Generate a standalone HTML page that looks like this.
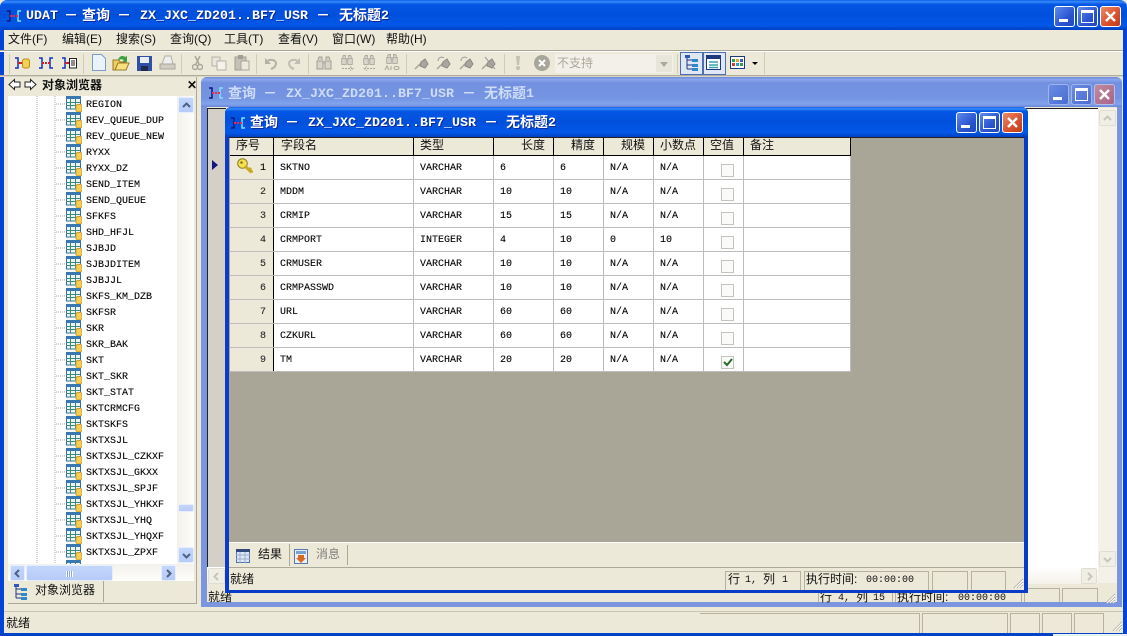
<!DOCTYPE html>
<html><head><meta charset="utf-8"><style>
html,body{margin:0;padding:0;background:#ece9d8}
#r{position:relative;width:1127px;height:636px;overflow:hidden;background:#ece9d8;font-family:"Liberation Mono","Noto Sans CJK SC",monospace;font-size:10px;color:#000}
#r div,#r span,#r svg{position:absolute}
.t{white-space:pre;line-height:14px;height:14px;margin-top:1px;-webkit-text-stroke:.1px #000}
.t:has(+svg){margin-top:2px}
.c{font-family:"Liberation Sans","Noto Sans CJK SC",sans-serif;font-size:12px;line-height:16px;height:16px;white-space:pre;color:#111}
.m{font-family:"Liberation Mono",monospace;font-size:10px;line-height:14px;height:14px;white-space:pre;color:#111}
.b{font-family:"Liberation Mono","Noto Sans CJK SC",monospace;font-weight:bold;font-size:13.33px;line-height:18px;height:18px;white-space:pre;color:#fff;text-shadow:1px 1px 0 #0a2a9c}
.z{font-size:14px}
.i{color:#cfdcf6;text-shadow:none}
.tb{background:linear-gradient(#0a5de8 0,#3a8cf8 6%,#0456e4 14%,#0150dc 50%,#0258e8 85%,#0240c0 100%)}
.tbi{background:linear-gradient(#6c87d8 0,#8aa6ec 8%,#7290df 20%,#7494e2 70%,#81a3ec 90%,#6a86d6 100%)}
.wb{width:19px;height:19px;border:1px solid #fff;border-radius:3px;background:linear-gradient(135deg,#5f8af0,#2a55d0 60%,#2048c0)}
.wx{background:linear-gradient(135deg,#ea8a6a,#d8502c 60%,#c03c18)}
.wbi{border-color:#9fb4ea;background:linear-gradient(135deg,#6a8ce4,#4a6cd0)}
.wxi{border-color:#b6bfe6;background:linear-gradient(135deg,#c18a9c,#a8648a)}
.mn{left:4px;top:12px;width:9px;height:3px;background:#fff}
.mx{left:3px;top:3px;border:1px solid #fff;border-top-width:3px;box-sizing:border-box;width:13px;height:13px}
.sb{background:linear-gradient(#c4d6fb,#b6cbf8);border:1px solid #e6eefd;border-radius:2px;box-sizing:border-box}
.dis{background:#f0efe6;border:1px solid #e0ded0;box-sizing:border-box;border-radius:2px}
.p{border:1px solid #b6b29f;border-bottom:0;box-sizing:border-box;}
.h{height:1px;background:#bdbdbd}
.v{width:1px;background:#bdbdbd}
.k{width:1px;background:#000}
.cb{width:11px;height:11px;border:1px solid #c4c4bc;background:#fafafa}
.ic{width:16px;height:16px}
</style></head><body><div id="r">
<svg style="display:none;width:0;height:0"><defs>
<symbol id="tbl" viewBox="0 0 16 16"><rect x="0.5" y="1" width="14" height="12" fill="#eef4fa" stroke="#3a7098"/><rect x="0" y="0" width="15" height="3" fill="#3a78b0"/><path d="M0 6.500h14M0 9.500h14M4.500 3v10M9.500 3v10" stroke="#3a8a78"/><rect x="10" y="8.500" width="6" height="7.500" rx="2" fill="#f4d050" stroke="#c8a030"/></symbol>
<symbol id="lnk" viewBox="0 0 16 12"><path d="M1 1h3v10H1M15 1h-3v10h3" fill="none" stroke="#1030c0" stroke-width="1.500"/><path d="M4 6h8" stroke="#d02030" stroke-width="2" stroke-dasharray="2 1"/></symbol>
<symbol id="lnkw" viewBox="0 0 16 12"><path d="M1 1h3v10H1" fill="none" stroke="#0a1a80" stroke-width="1.500"/><path d="M15 1h-3v10h3" fill="none" stroke="#7fe0ff" stroke-width="1.500"/><path d="M4 6h8" stroke="#e03050" stroke-width="2" stroke-dasharray="2 1"/></symbol>
<symbol id="bin" viewBox="0 0 16 16"><path d="M2 5l1-3h3v3M14 5l-1-3h-3v3" fill="#d4d2c8" stroke="#a09e92"/><rect x="1" y="6" width="6" height="8" fill="#d8d6cc" stroke="#a09e92"/><rect x="9" y="6" width="6" height="8" fill="#d8d6cc" stroke="#a09e92"/><rect x="6" y="6" width="4" height="3" fill="#b8b6a8"/></symbol>
<symbol id="cone" viewBox="0 0 16 16"><path d="M1 14L8 7" stroke="#a8a69a" stroke-width="1.500"/><path d="M7 7l4-3 3 5-3 4-5-2z" fill="#a8a6a0" stroke="#8c8a80"/></symbol>
<symbol id="grip" viewBox="0 0 12 12"><path d="M11 2L2 11M11 5L5 11M11 8L8 11" stroke="#a8a594"/><path d="M11 3L3 11M11 6L6 11M11 9L9 11" stroke="#fff"/></symbol>
</defs></svg>

<!-- main frame -->
<div class="tb" style="left:0;top:0;width:1127px;height:30px;border-radius:7px 7px 0 0"></div>
<div style="left:0;top:30px;width:4px;height:606px;background:#0343d8"></div>
<div style="left:1123px;top:30px;width:4px;height:606px;background:#0343d8"></div>
<div style="left:0;top:633px;width:1127px;height:3px;background:#0343c8"></div>
<div style="left:1053px;top:634px;width:74px;height:2px;background:#e8f0fa"></div>
<svg style="left:6px;top:10px;width:16px;height:12px"><use href="#lnkw"/></svg>
<span class="b" style="left:26px;top:8px">UDAT</span><span class="b z" style="left:64px;top:8px">－</span><span class="b z" style="left:82px;top:8px">查询</span><span class="b z" style="left:117px;top:8px">－</span><span class="b" style="left:140px;top:8px">ZX_JXC_ZD201..BF7_USR</span><span class="b z" style="left:316px;top:8px">－</span><span class="b z" style="left:339px;top:8px">无标题</span><span class="b" style="left:381px;top:8px">2</span>
<div class="wb" style="left:1054px;top:6px"><div class="mn"></div></div>
<div class="wb" style="left:1077px;top:6px"><div class="mx"></div></div>
<div class="wb wx" style="left:1100px;top:6px"><svg style="left:3px;top:3px;width:13px;height:13px"><path d="M2 2l9 9M11 2l-9 9" stroke="#fff" stroke-width="2.400"/></svg></div>

<!-- menu -->
<span class="c" style="left:8px;top:31px">文件(F)</span>
<span class="c" style="left:62px;top:31px">编辑(E)</span>
<span class="c" style="left:116px;top:31px">搜索(S)</span>
<span class="c" style="left:170px;top:31px">查询(Q)</span>
<span class="c" style="left:224px;top:31px">工具(T)</span>
<span class="c" style="left:278px;top:31px">查看(V)</span>
<span class="c" style="left:332px;top:31px">窗口(W)</span>
<span class="c" style="left:386px;top:31px">帮助(H)</span>
<div style="left:0;top:50px;width:1123px;height:1px;background:#aca899"></div>
<div style="left:0;top:51px;width:1123px;height:1px;background:#fff"></div>

<!-- toolbar -->
<div style="left:9px;top:54px;width:1px;height:20px;background:#cfccb8"></div>
<svg style="left:14px;top:57px;width:17px;height:12px"><path d="M1 1h3v10H1" fill="none" stroke="#1030c0" stroke-width="1.500"/><path d="M4 6h4" stroke="#d02030" stroke-width="2"/><rect x="8.500" y="2" width="7" height="9" rx="2" fill="#f4d050" stroke="#b89020"/></svg>
<svg style="left:38px;top:57px;width:16px;height:12px"><use href="#lnk"/></svg>
<svg style="left:61px;top:57px;width:17px;height:12px"><path d="M1 1h3v10H1" fill="none" stroke="#1030c0" stroke-width="1.500"/><path d="M4 6h4" stroke="#d02030" stroke-width="2"/><rect x="8.500" y="1.500" width="7" height="9.500" fill="#fff" stroke="#222"/><path d="M10 4h4M10 6h4M10 8h4" stroke="#222"/></svg>
<div style="left:83px;top:54px;width:1px;height:20px;background:#cfccb8"></div>
<svg style="left:91px;top:54px;width:16px;height:18px"><path d="M1.500 .5h9l4 4v12h-13z" fill="#eaf2fc" stroke="#7d9bc8"/></svg>
<svg style="left:112px;top:54px;width:18px;height:18px"><path d="M1 6h6l1 2h6v8H1z" fill="#f0cf60" stroke="#9a7a20"/><path d="M3 16l3-7h11l-3 7z" fill="#f8e080" stroke="#9a7a20"/><path d="M6 6c1-4 5-5 7-3l2-1v6h-5l2-2c-2-1-4-1-6 0z" fill="#40a040"/></svg>
<svg style="left:137px;top:56px;width:15px;height:15px"><rect width="15" height="15" fill="#3050a8"/><rect x="3" y="1" width="9" height="6" fill="#e8ecf4"/><rect x="4" y="10" width="7" height="5" fill="#20284c"/></svg>
<svg style="left:159px;top:55px;width:17px;height:17px"><path d="M3 9l3-8h6l2 8z" fill="#eee" stroke="#b0aea4"/><path d="M1 9h15v5H1z" fill="#d0cec4" stroke="#a8a69a"/></svg>
<div style="left:181px;top:54px;width:1px;height:20px;background:#cfccb8"></div>
<svg style="left:192px;top:55px;width:11px;height:16px"><path d="M3 1l4 8M8 1L4 9" stroke="#aaa89c" stroke-width="1.500"/><circle cx="3" cy="12" r="2.500" fill="none" stroke="#aaa89c" stroke-width="1.500"/><circle cx="8" cy="12" r="2.500" fill="none" stroke="#aaa89c" stroke-width="1.500"/></svg>
<svg style="left:211px;top:56px;width:16px;height:15px"><rect x="1" y="1" width="8" height="9" fill="#e8e6dc" stroke="#b4b2a6"/><rect x="6" y="5" width="9" height="9" fill="#f4f2ea" stroke="#b4b2a6"/></svg>
<svg style="left:234px;top:55px;width:16px;height:16px"><rect x="1" y="2" width="11" height="13" fill="#c4c2b6" stroke="#a09e92"/><rect x="4" y="0" width="5" height="4" fill="#a09e92"/><rect x="7" y="6" width="8" height="9" fill="#eceade" stroke="#a8a69a"/></svg>
<div style="left:256px;top:54px;width:1px;height:20px;background:#cfccb8"></div>
<svg style="left:264px;top:56px;width:14px;height:14px"><path d="M2 6c3-3 9-3 10 1 0 3-2 5-5 6" fill="none" stroke="#b4b2a6" stroke-width="2"/><path d="M1 2v6h6z" fill="#b4b2a6"/></svg>
<svg style="left:287px;top:56px;width:14px;height:14px"><path d="M12 6C9 3 3 3 2 7c0 3 2 5 5 6" fill="none" stroke="#c0beb2" stroke-width="2"/><path d="M13 2v6H7z" fill="#c0beb2"/></svg>
<div style="left:308px;top:54px;width:1px;height:20px;background:#cfccb8"></div>
<svg style="left:316px;top:55px;width:16px;height:16px"><use href="#bin"/></svg>
<svg style="left:339px;top:54px;width:16px;height:12px"><use href="#bin"/></svg><svg style="left:342px;top:66px;width:14px;height:5px"><path d="M0 2.500h10M8 .5l3 2-3 2" fill="none" stroke="#a8a69a" stroke-dasharray="2 1"/></svg>
<svg style="left:361px;top:54px;width:16px;height:12px"><use href="#bin"/></svg><svg style="left:362px;top:66px;width:14px;height:5px"><path d="M13 2.500H3M5 .5l-3 2 3 2" fill="none" stroke="#a8a69a" stroke-dasharray="2 1"/></svg>
<svg style="left:384px;top:53px;width:16px;height:12px"><use href="#bin"/></svg><svg style="left:384px;top:65px;width:16px;height:6px"><path d="M1 5l2-4 2 4M7 1v4M10 3c0-2 5-2 5 0s-5 2-5 0z" fill="none" stroke="#a8a69a"/></svg>
<div style="left:406px;top:54px;width:1px;height:20px;background:#cfccb8"></div>
<svg class="ic" style="left:414px;top:55px"><use href="#cone"/></svg>
<svg class="ic" style="left:436px;top:55px"><use href="#cone"/><path d="M2 6c0-3 3-5 6-3" fill="none" stroke="#999"/></svg>
<svg class="ic" style="left:459px;top:55px"><use href="#cone"/><path d="M2 6c0-3 3-5 6-3" fill="none" stroke="#999"/></svg>
<svg class="ic" style="left:481px;top:55px"><use href="#cone"/><path d="M4 2l10 12" stroke="#999"/></svg>
<div style="left:504px;top:54px;width:1px;height:20px;background:#cfccb8"></div>
<svg style="left:514px;top:55px;width:8px;height:16px"><path d="M2 1h4L5 10H3z" fill="#c4c2b6"/><circle cx="4" cy="13" r="2" fill="#c4c2b6"/></svg>
<svg class="ic" style="left:534px;top:55px"><circle cx="8" cy="8" r="8" fill="#a8a69a"/><path d="M5 5l6 6M11 5l-6 6" stroke="#fff" stroke-width="2"/></svg>
<div style="left:555px;top:54px;width:118px;height:19px;background:#f2f0e8"></div>
<div style="left:656px;top:55px;width:16px;height:17px;background:#e8e6da"></div>
<div style="left:660px;top:62px;width:0;height:0;border:4px solid transparent;border-top:5px solid #aca899;border-bottom:0"></div>
<span class="c" style="left:557px;top:55px;color:#aca899">不支持</span>
<div style="left:677px;top:54px;width:1px;height:20px;background:#cfccb8"></div>
<div style="left:680px;top:52px;width:23px;height:23px;background:#dfe6f4;border:1px solid #4b6fb0;box-sizing:border-box"></div>
<div style="left:703px;top:52px;width:23px;height:23px;background:#dfe6f4;border:1px solid #4b6fb0;box-sizing:border-box"></div>
<svg class="ic" style="left:684px;top:55px"><path d="M3 1v13M3 5h6M3 10h6M3 14h6" stroke="#203880" fill="none"/><rect x="1" y="0" width="5" height="3" fill="#2c58b8"/><rect x="8" y="4" width="6" height="3" fill="#2c88c8"/><rect x="8" y="9" width="6" height="3" fill="#2c88c8"/><rect x="8" y="13" width="6" height="3" fill="#2c88c8"/></svg>
<svg class="ic" style="left:706px;top:55px"><rect x=".5" y=".5" width="14" height="14" fill="#fff" stroke="#203880"/><rect x="1" y="1" width="13" height="3" fill="#203880"/><path d="M3 7h9M3 10h9M3 12.500h9" stroke="#3aa0b0" stroke-width="1.500"/></svg>
<svg class="ic" style="left:730px;top:56px"><rect x=".5" y=".5" width="14" height="12" fill="#fff" stroke="#203880"/><rect x="2" y="3" width="3" height="3" fill="#30a050"/><rect x="6" y="3" width="3" height="3" fill="#e8a030"/><rect x="10" y="3" width="3" height="3" fill="#3060c0"/><rect x="2" y="7" width="3" height="3" fill="#d04030"/><rect x="6" y="7" width="3" height="3" fill="#30a0c0"/><rect x="10" y="7" width="3" height="3" fill="#30a050"/></svg>
<div style="left:752px;top:62px;width:0;height:0;border:3px solid transparent;border-top:3px solid #000;border-bottom:0"></div>
<div style="left:764px;top:52px;width:1px;height:22px;background:#cfccb8"></div>
<div style="left:0;top:75px;width:1123px;height:2px;background:linear-gradient(#9a988a,#ece9d8)"></div>

<!-- left pane -->
<div style="left:4px;top:77px;width:192px;height:527px;background:#ece9d8;border-right:1px solid #aca899"></div>
<svg style="left:8px;top:78px;width:29px;height:13px"><path d="M1 6.500L6.500 1.500V4H12V9H6.500V11.500zM28 6.500L22.500 1.500V4H17V9H22.500V11.500z" fill="#fff" stroke="#222"/></svg>
<span class="c" style="left:42px;top:77px;font-weight:bold">对象浏览器</span>
<span class="c" style="left:187px;top:77px;font-size:12px;font-weight:bold">✕</span>
<div style="left:8px;top:96px;width:186px;height:470px;background:#fff"></div>
<svg style="left:0;top:0;width:80px;height:566px"><path d="M37 96V566M55 96V566M56 104h10M56 120h10M56 136h10M56 152h10M56 168h10M56 184h10M56 200h10M56 216h10M56 232h10M56 248h10M56 264h10M56 280h10M56 296h10M56 312h10M56 328h10M56 344h10M56 360h10M56 376h10M56 392h10M56 408h10M56 424h10M56 440h10M56 456h10M56 472h10M56 488h10M56 504h10M56 520h10M56 536h10M56 552h10" fill="none" stroke="#a8a8a0" stroke-dasharray="1 1"/></svg>
<span class="t" style="left:86px;top:97px">REGION</span><svg class="ic" style="left:66px;top:96px"><use href="#tbl"/></svg>
<span class="t" style="left:86px;top:113px">REV_QUEUE_DUP</span><svg class="ic" style="left:66px;top:112px"><use href="#tbl"/></svg>
<span class="t" style="left:86px;top:129px">REV_QUEUE_NEW</span><svg class="ic" style="left:66px;top:128px"><use href="#tbl"/></svg>
<span class="t" style="left:86px;top:145px">RYXX</span><svg class="ic" style="left:66px;top:144px"><use href="#tbl"/></svg>
<span class="t" style="left:86px;top:161px">RYXX_DZ</span><svg class="ic" style="left:66px;top:160px"><use href="#tbl"/></svg>
<span class="t" style="left:86px;top:177px">SEND_ITEM</span><svg class="ic" style="left:66px;top:176px"><use href="#tbl"/></svg>
<span class="t" style="left:86px;top:193px">SEND_QUEUE</span><svg class="ic" style="left:66px;top:192px"><use href="#tbl"/></svg>
<span class="t" style="left:86px;top:209px">SFKFS</span><svg class="ic" style="left:66px;top:208px"><use href="#tbl"/></svg>
<span class="t" style="left:86px;top:225px">SHD_HFJL</span><svg class="ic" style="left:66px;top:224px"><use href="#tbl"/></svg>
<span class="t" style="left:86px;top:241px">SJBJD</span><svg class="ic" style="left:66px;top:240px"><use href="#tbl"/></svg>
<span class="t" style="left:86px;top:257px">SJBJDITEM</span><svg class="ic" style="left:66px;top:256px"><use href="#tbl"/></svg>
<span class="t" style="left:86px;top:273px">SJBJJL</span><svg class="ic" style="left:66px;top:272px"><use href="#tbl"/></svg>
<span class="t" style="left:86px;top:289px">SKFS_KM_DZB</span><svg class="ic" style="left:66px;top:288px"><use href="#tbl"/></svg>
<span class="t" style="left:86px;top:305px">SKFSR</span><svg class="ic" style="left:66px;top:304px"><use href="#tbl"/></svg>
<span class="t" style="left:86px;top:321px">SKR</span><svg class="ic" style="left:66px;top:320px"><use href="#tbl"/></svg>
<span class="t" style="left:86px;top:337px">SKR_BAK</span><svg class="ic" style="left:66px;top:336px"><use href="#tbl"/></svg>
<span class="t" style="left:86px;top:353px">SKT</span><svg class="ic" style="left:66px;top:352px"><use href="#tbl"/></svg>
<span class="t" style="left:86px;top:369px">SKT_SKR</span><svg class="ic" style="left:66px;top:368px"><use href="#tbl"/></svg>
<span class="t" style="left:86px;top:385px">SKT_STAT</span><svg class="ic" style="left:66px;top:384px"><use href="#tbl"/></svg>
<span class="t" style="left:86px;top:401px">SKTCRMCFG</span><svg class="ic" style="left:66px;top:400px"><use href="#tbl"/></svg>
<span class="t" style="left:86px;top:417px">SKTSKFS</span><svg class="ic" style="left:66px;top:416px"><use href="#tbl"/></svg>
<span class="t" style="left:86px;top:433px">SKTXSJL</span><svg class="ic" style="left:66px;top:432px"><use href="#tbl"/></svg>
<span class="t" style="left:86px;top:449px">SKTXSJL_CZKXF</span><svg class="ic" style="left:66px;top:448px"><use href="#tbl"/></svg>
<span class="t" style="left:86px;top:465px">SKTXSJL_GKXX</span><svg class="ic" style="left:66px;top:464px"><use href="#tbl"/></svg>
<span class="t" style="left:86px;top:481px">SKTXSJL_SPJF</span><svg class="ic" style="left:66px;top:480px"><use href="#tbl"/></svg>
<span class="t" style="left:86px;top:497px">SKTXSJL_YHKXF</span><svg class="ic" style="left:66px;top:496px"><use href="#tbl"/></svg>
<span class="t" style="left:86px;top:513px">SKTXSJL_YHQ</span><svg class="ic" style="left:66px;top:512px"><use href="#tbl"/></svg>
<span class="t" style="left:86px;top:529px">SKTXSJL_YHQXF</span><svg class="ic" style="left:66px;top:528px"><use href="#tbl"/></svg>
<span class="t" style="left:86px;top:545px">SKTXSJL_ZPXF</span><svg class="ic" style="left:66px;top:544px"><use href="#tbl"/></svg>
<svg class="ic" style="left:66px;top:560px"><use href="#tbl"/></svg>
<!-- left vscroll -->
<div style="left:177px;top:96px;width:17px;height:468px;background:linear-gradient(90deg,#f3f1ec,#fdfdfa)"></div>
<div class="sb" style="left:178px;top:97px;width:16px;height:16px"><svg style="left:3px;top:4px;width:9px;height:7px"><path d="M1 5l3.500-3.500L8 5" fill="none" stroke="#4d6185" stroke-width="2"/></svg></div>
<div class="sb" style="left:178px;top:504px;width:16px;height:8px"></div>
<div class="sb" style="left:178px;top:547px;width:16px;height:16px"><svg style="left:3px;top:4px;width:9px;height:7px"><path d="M1 2l3.500 3.500L8 2" fill="none" stroke="#4d6185" stroke-width="2"/></svg></div>
<!-- left hscroll -->
<div style="left:8px;top:564px;width:186px;height:17px;background:linear-gradient(#f3f1ec,#fdfdfa)"></div>
<div class="sb" style="left:10px;top:565px;width:15px;height:16px"><svg style="left:3px;top:3px;width:7px;height:9px"><path d="M5 1L1.500 4.500 5 8" fill="none" stroke="#4d6185" stroke-width="2"/></svg></div>
<div class="sb" style="left:26px;top:565px;width:87px;height:16px"><div style="left:39px;top:5px;width:7px;height:6px;background:repeating-linear-gradient(90deg,#fff 0 1px,#8ea6d8 1px 2px)"></div></div>
<div class="sb" style="left:161px;top:565px;width:15px;height:16px"><svg style="left:3px;top:3px;width:7px;height:9px"><path d="M2 1l3.500 3.500L2 8" fill="none" stroke="#4d6185" stroke-width="2"/></svg></div>
<!-- left tabs -->
<div style="left:8px;top:581px;width:95px;height:21px;border-right:1px solid #aca899"></div>
<svg class="ic" style="left:13px;top:584px"><path d="M3 1v13M3 5h6M3 10h6M3 14h6" stroke="#203880" fill="none"/><rect x="1" y="0" width="5" height="3" fill="#2c58b8"/><rect x="8" y="4" width="6" height="3" fill="#2c88c8"/><rect x="8" y="9" width="6" height="3" fill="#2c88c8"/><rect x="8" y="13" width="6" height="3" fill="#2c88c8"/></svg>
<span class="c" style="left:35px;top:582px">对象浏览器</span>
<div style="left:8px;top:603px;width:188px;height:1px;background:#aca899"></div>

<!-- MDI area -->
<div style="left:197px;top:77px;width:926px;height:535px;background:#ece9d8"></div>

<!-- child 1 -->
<div style="left:201px;top:77px;width:921px;height:530px;background:#7b96de;border-radius:6px 6px 0 0"></div>
<div class="tbi" style="left:201px;top:77px;width:921px;height:30px;border-radius:6px 6px 0 0"></div>
<svg style="left:208px;top:87px;width:16px;height:12px"><use href="#lnkw"/></svg>
<span class="b i z" style="left:228px;top:86px">查询</span><span class="b i z" style="left:263px;top:86px">－</span><span class="b i" style="left:286px;top:86px">ZX_JXC_ZD201..BF7_USR</span><span class="b i z" style="left:462px;top:86px">－</span><span class="b i z" style="left:484px;top:86px">无标题</span><span class="b i" style="left:526px;top:86px">1</span>
<div class="wb wbi" style="left:1048px;top:84px"><div class="mn"></div></div>
<div class="wb wbi" style="left:1071px;top:84px"><div class="mx"></div></div>
<div class="wb wxi" style="left:1094px;top:84px"><svg style="left:3px;top:3px;width:13px;height:13px"><path d="M2 2l9 9M11 2l-9 9" stroke="#fff" stroke-width="2.400"/></svg></div>
<div style="left:207px;top:107px;width:910px;height:495px;background:#ece9d8"></div>
<div style="left:207px;top:108px;width:19px;height:459px;background:#d4d0c8;border-top:1px solid #222;border-left:1px solid #222;box-sizing:border-box"></div>
<div style="left:1026px;top:108px;width:72px;height:459px;background:#fff;border-top:1px solid #222;box-sizing:border-box"></div>
<div style="left:1098px;top:108px;width:19px;height:475px;background:#f3f1e8"></div>
<div class="dis" style="left:1099px;top:110px;width:17px;height:16px"><svg style="left:3px;top:4px;width:9px;height:7px"><path d="M1 5l3.500-3.500L8 5" fill="none" stroke="#c8c6ba" stroke-width="2"/></svg></div>
<div class="dis" style="left:1099px;top:551px;width:17px;height:16px"><svg style="left:3px;top:4px;width:9px;height:7px"><path d="M1 2l3.500 3.500L8 2" fill="none" stroke="#c8c6ba" stroke-width="2"/></svg></div>
<div style="left:207px;top:567px;width:891px;height:17px;background:linear-gradient(#fff,#f3f1e8)"></div>
<div class="dis" style="left:208px;top:568px;width:17px;height:16px"><svg style="left:4px;top:3px;width:7px;height:9px"><path d="M5 1L1.500 4.500 5 8" fill="none" stroke="#c8c6ba" stroke-width="2"/></svg></div>
<div class="dis" style="left:1081px;top:568px;width:16px;height:16px"><svg style="left:4px;top:3px;width:7px;height:9px"><path d="M2 1l3.500 3.500L2 8" fill="none" stroke="#c8c6ba" stroke-width="2"/></svg></div>
<div class="p" style="left:818px;top:588px;width:75px;height:14px"></div>
<div class="p" style="left:895px;top:588px;width:127px;height:14px"></div>
<div class="p" style="left:1024px;top:588px;width:36px;height:14px"></div>
<div class="p" style="left:1062px;top:588px;width:36px;height:14px"></div>
<svg style="left:1104px;top:592px;width:12px;height:12px"><use href="#grip"/></svg>
<span class="c" style="left:208px;top:589px">就绪</span>
<span class="c" style="left:820px;top:589px">行</span><span class="m" style="left:838px;top:592px">4,</span><span class="c" style="left:856px;top:589px">列</span><span class="m" style="left:873px;top:592px">15</span>
<span class="c" style="left:897px;top:589px">执行时间:</span><span class="m" style="left:958px;top:592px">00:00:00</span>

<!-- child 2 -->
<div style="left:225px;top:107px;width:803px;height:486px;background:#0a3cc8;border-radius:6px 6px 0 0"></div>
<div class="tb" style="left:225px;top:107px;width:803px;height:30px;border-radius:6px 6px 0 0"></div>
<svg style="left:230px;top:117px;width:16px;height:12px"><use href="#lnkw"/></svg>
<span class="b z" style="left:250px;top:115px">查询</span><span class="b z" style="left:285px;top:115px">－</span><span class="b" style="left:308px;top:115px">ZX_JXC_ZD201..BF7_USR</span><span class="b z" style="left:484px;top:115px">－</span><span class="b z" style="left:506px;top:115px">无标题</span><span class="b" style="left:548px;top:115px">2</span>
<div class="wb" style="left:956px;top:112px"><div class="mn"></div></div>
<div class="wb" style="left:979px;top:112px"><div class="mx"></div></div>
<div class="wb wx" style="left:1002px;top:112px"><svg style="left:3px;top:3px;width:13px;height:13px"><path d="M2 2l9 9M11 2l-9 9" stroke="#fff" stroke-width="2.400"/></svg></div>
<div style="left:229px;top:137px;width:795px;height:453px;background:#ece9d8"></div>
<div style="left:229px;top:137px;width:795px;height:405px;background:#a9a697;border-top:1px solid #222;box-sizing:border-box"></div>

<!-- grid -->
<div style="left:230px;top:138px;width:620px;height:233px;background:#fff"></div>
<div style="left:230px;top:138px;width:620px;height:17px;background:#ece9d8"></div>
<div style="left:230px;top:156px;width:43px;height:215px;background:#ece9d8"></div>
<div style="left:230px;top:155px;width:621px;height:1px;background:#000"></div>
<div class="k" style="left:273px;top:138px;height:18px"></div>
<div class="k" style="left:413px;top:138px;height:18px"></div>
<div class="k" style="left:493px;top:138px;height:18px"></div>
<div class="k" style="left:553px;top:138px;height:18px"></div>
<div class="k" style="left:603px;top:138px;height:18px"></div>
<div class="k" style="left:653px;top:138px;height:18px"></div>
<div class="k" style="left:703px;top:138px;height:18px"></div>
<div class="k" style="left:743px;top:138px;height:18px"></div>
<div class="k" style="left:850px;top:138px;height:18px"></div>
<div class="k" style="left:273px;top:156px;height:216px"></div>
<div class="v" style="left:413px;top:156px;height:216px"></div>
<div class="v" style="left:493px;top:156px;height:216px"></div>
<div class="v" style="left:553px;top:156px;height:216px"></div>
<div class="v" style="left:603px;top:156px;height:216px"></div>
<div class="v" style="left:653px;top:156px;height:216px"></div>
<div class="v" style="left:703px;top:156px;height:216px"></div>
<div class="v" style="left:743px;top:156px;height:216px"></div>
<div class="v" style="left:850px;top:156px;height:216px"></div>
<div class="h" style="left:230px;top:179px;width:621px"></div>
<div class="h" style="left:230px;top:203px;width:621px"></div>
<div class="h" style="left:230px;top:227px;width:621px"></div>
<div class="h" style="left:230px;top:251px;width:621px"></div>
<div class="h" style="left:230px;top:275px;width:621px"></div>
<div class="h" style="left:230px;top:299px;width:621px"></div>
<div class="h" style="left:230px;top:323px;width:621px"></div>
<div class="h" style="left:230px;top:347px;width:621px"></div>
<div class="h" style="left:230px;top:371px;width:621px"></div>
<div style="left:212px;top:160px;width:0;height:0;border:5px solid transparent;border-left:6px solid #101880;border-right:0"></div>
<span class="c" style="left:236px;top:137px">序号</span>
<span class="c" style="left:281px;top:137px">字段名</span>
<span class="c" style="left:420px;top:137px">类型</span>
<span class="c" style="left:521px;top:137px">长度</span>
<span class="c" style="left:571px;top:137px">精度</span>
<span class="c" style="left:621px;top:137px">规模</span>
<span class="c" style="left:660px;top:137px">小数点</span>
<span class="c" style="left:710px;top:137px">空值</span>
<span class="c" style="left:750px;top:137px">备注</span>
<svg class="ic" style="left:237px;top:158px"><circle cx="5.500" cy="5.500" r="4.800" fill="#f4e050" stroke="#8a7a20"/><path d="M8 8l6.500 6.500M12 12l2-2M14 14l1.500-1.500" stroke="#c8a820" stroke-width="3"/><circle cx="4.500" cy="4.500" r="1.300" fill="#887010"/></svg>
<span class="t" style="left:260px;top:161px">1</span><span class="t" style="left:260px;top:185px;color:#333">2</span><span class="t" style="left:260px;top:209px;color:#333">3</span><span class="t" style="left:260px;top:233px;color:#333">4</span><span class="t" style="left:260px;top:257px;color:#333">5</span><span class="t" style="left:260px;top:281px;color:#333">6</span><span class="t" style="left:260px;top:305px;color:#333">7</span><span class="t" style="left:260px;top:329px;color:#333">8</span><span class="t" style="left:260px;top:353px;color:#333">9</span>

<span class="t" style="left:280px;top:161px">SKTNO</span><span class="t" style="left:420px;top:161px">VARCHAR</span><span class="t" style="left:500px;top:161px">6</span><span class="t" style="left:560px;top:161px">6</span><span class="t" style="left:610px;top:161px">N/A</span><span class="t" style="left:660px;top:161px">N/A</span>
<span class="t" style="left:280px;top:185px">MDDM</span><span class="t" style="left:420px;top:185px">VARCHAR</span><span class="t" style="left:500px;top:185px">10</span><span class="t" style="left:560px;top:185px">10</span><span class="t" style="left:610px;top:185px">N/A</span><span class="t" style="left:660px;top:185px">N/A</span>
<span class="t" style="left:280px;top:209px">CRMIP</span><span class="t" style="left:420px;top:209px">VARCHAR</span><span class="t" style="left:500px;top:209px">15</span><span class="t" style="left:560px;top:209px">15</span><span class="t" style="left:610px;top:209px">N/A</span><span class="t" style="left:660px;top:209px">N/A</span>
<span class="t" style="left:280px;top:233px">CRMPORT</span><span class="t" style="left:420px;top:233px">INTEGER</span><span class="t" style="left:500px;top:233px">4</span><span class="t" style="left:560px;top:233px">10</span><span class="t" style="left:610px;top:233px">0</span><span class="t" style="left:660px;top:233px">10</span>
<span class="t" style="left:280px;top:257px">CRMUSER</span><span class="t" style="left:420px;top:257px">VARCHAR</span><span class="t" style="left:500px;top:257px">10</span><span class="t" style="left:560px;top:257px">10</span><span class="t" style="left:610px;top:257px">N/A</span><span class="t" style="left:660px;top:257px">N/A</span>
<span class="t" style="left:280px;top:281px">CRMPASSWD</span><span class="t" style="left:420px;top:281px">VARCHAR</span><span class="t" style="left:500px;top:281px">10</span><span class="t" style="left:560px;top:281px">10</span><span class="t" style="left:610px;top:281px">N/A</span><span class="t" style="left:660px;top:281px">N/A</span>
<span class="t" style="left:280px;top:305px">URL</span><span class="t" style="left:420px;top:305px">VARCHAR</span><span class="t" style="left:500px;top:305px">60</span><span class="t" style="left:560px;top:305px">60</span><span class="t" style="left:610px;top:305px">N/A</span><span class="t" style="left:660px;top:305px">N/A</span>
<span class="t" style="left:280px;top:329px">CZKURL</span><span class="t" style="left:420px;top:329px">VARCHAR</span><span class="t" style="left:500px;top:329px">60</span><span class="t" style="left:560px;top:329px">60</span><span class="t" style="left:610px;top:329px">N/A</span><span class="t" style="left:660px;top:329px">N/A</span>
<span class="t" style="left:280px;top:353px">TM</span><span class="t" style="left:420px;top:353px">VARCHAR</span><span class="t" style="left:500px;top:353px">20</span><span class="t" style="left:560px;top:353px">20</span><span class="t" style="left:610px;top:353px">N/A</span><span class="t" style="left:660px;top:353px">N/A</span>
<div class="cb" style="left:721px;top:164px"></div>
<div class="cb" style="left:721px;top:188px"></div>
<div class="cb" style="left:721px;top:212px"></div>
<div class="cb" style="left:721px;top:236px"></div>
<div class="cb" style="left:721px;top:260px"></div>
<div class="cb" style="left:721px;top:284px"></div>
<div class="cb" style="left:721px;top:308px"></div>
<div class="cb" style="left:721px;top:332px"></div>
<div class="cb" style="left:721px;top:356px"><svg style="left:1px;top:1px;width:10px;height:9px"><path d="M1 4l3 3 5-6" fill="none" stroke="#2a6a2a" stroke-width="2"/></svg></div>

<!-- child 2 tabs -->
<div style="left:229px;top:542px;width:795px;height:1px;background:#fff"></div>
<div style="left:229px;top:567px;width:795px;height:1px;background:#aca899"></div>
<div style="left:289px;top:544px;width:1px;height:22px;background:#aca899"></div>
<div style="left:347px;top:545px;width:1px;height:20px;background:#aca899"></div>
<svg class="ic" style="left:236px;top:549px;width:14px;height:14px"><rect x=".5" y=".5" width="13" height="13" fill="#dfe6f4" stroke="#5070a8"/><rect x="0" y="0" width="14" height="3" fill="#304a80"/><path d="M0 6h14M0 10h14M4 3v11M9 3v11" stroke="#9ab0d0"/></svg>
<span class="c" style="left:258px;top:546px">结果</span>
<svg class="ic" style="left:294px;top:549px;width:14px;height:15px"><rect x=".5" y=".5" width="13" height="14" fill="#e8eef8" stroke="#5878b0"/><rect x="2" y="2" width="10" height="3" fill="#7aa0d0"/><path d="M4 6h6v3h2l-5 5-5-5h2z" fill="#d86a20"/></svg>
<span class="c" style="left:316px;top:546px;color:#808080">消息</span>
<!-- child 2 status -->
<div class="p" style="left:725px;top:571px;width:76px;height:19px"></div>
<div class="p" style="left:804px;top:571px;width:125px;height:19px"></div>
<div class="p" style="left:932px;top:571px;width:36px;height:19px"></div>
<div class="p" style="left:971px;top:571px;width:35px;height:19px"></div>
<svg style="left:1012px;top:577px;width:12px;height:12px"><use href="#grip"/></svg>
<span class="c" style="left:230px;top:571px">就绪</span>
<span class="c" style="left:728px;top:571px">行</span><span class="m" style="left:745px;top:574px">1,</span><span class="c" style="left:763px;top:571px">列</span><span class="m" style="left:782px;top:574px">1</span>
<span class="c" style="left:806px;top:571px">执行时间:</span><span class="m" style="left:866px;top:574px">00:00:00</span>

<!-- main status -->
<div style="left:4px;top:611px;width:1119px;height:1px;background:#c8c5b2"></div>
<div class="p" style="left:700px;top:613px;width:220px;height:20px;border-left:0"></div>
<div class="p" style="left:922px;top:613px;width:86px;height:20px"></div>
<div class="p" style="left:1010px;top:613px;width:30px;height:20px"></div>
<div class="p" style="left:1042px;top:613px;width:30px;height:20px"></div>
<div class="p" style="left:1074px;top:613px;width:30px;height:20px"></div>
<svg style="left:1111px;top:620px;width:12px;height:12px"><use href="#grip"/></svg>
<span class="c" style="left:6px;top:615px">就绪</span>
</div></body></html>
